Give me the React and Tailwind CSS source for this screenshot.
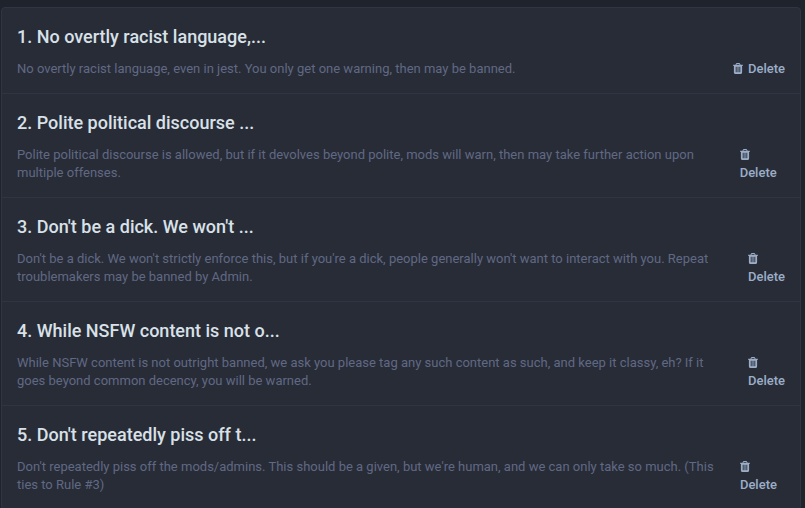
import React from 'react';

const rules = [
    {
        id: 1,
        title: '1. No overtly racist language,...',
        text: 'No overtly racist language, even in jest. You only get one warning, then may be banned.',
    },
    {
        id: 2,
        title: '2. Polite political discourse ...',
        text: 'Polite political discourse is allowed, but if it devolves beyond polite, mods will warn, then may take further action upon multiple offenses.',
    },
    {
        id: 3,
        title: "3. Don't be a dick. We won't ...",
        text: "Don't be a dick. We won't strictly enforce this, but if you're a dick, people generally won't want to interact with you. Repeat troublemakers may be banned by Admin.",
    },
    {
        id: 4,
        title: '4. While NSFW content is not o...',
        text: 'While NSFW content is not outright banned, we ask you please tag any such content as such, and keep it classy, eh? If it goes beyond common decency, you will be warned.',
    },
    {
        id: 5,
        title: "5. Don't repeatedly piss off t...",
        text: "Don't repeatedly piss off the mods/admins. This should be a given, but we're human, and we can only take so much. (This ties to Rule #3)",
    },
];

const TrashIcon = () => (
    <svg viewBox="192 0 1408 1792" fill="currentColor" aria-hidden="true" className="mr-[5px] inline-block h-[13px] w-[10px] align-[-2px]">
        <path d="M704 1376v-704q0-14-9-23t-23-9h-64q-14 0-23 9t-9 23v704q0 14 9 23t23 9h64q14 0 23-9t9-23zm256 0v-704q0-14-9-23t-23-9h-64q-14 0-23 9t-9 23v704q0 14 9 23t23 9h64q14 0 23-9t9-23zm256 0v-704q0-14-9-23t-23-9h-64q-14 0-23 9t-9 23v704q0 14 9 23t23 9h64q14 0 23-9t9-23zm-544-992h448l-48-117q-7-9-17-11h-317q-10 2-17 11zm928 32v64q0 14-9 23t-23 9h-96v948q0 83-47 143.5t-113 60.5h-832q-66 0-113-58.5t-47-141.5v-952h-96q-14 0-23-9t-9-23v-64q0-14 9-23t23-9h309l70-167q15-37 54-63t79-26h320q40 0 79 26t54 63l70 167h309q14 0 23 9t9 23z" />
    </svg>
);

const RuleItem = ({ rule }) => (
    <li className="border-b border-[#313543] p-[15px] last:border-b-0">
        <a href={`#rule-${rule.id}`} className="mb-2.5 block text-lg leading-[27px] font-medium text-[#d9e1e8]">
            {rule.title}
        </a>
        <div className="flex items-center justify-between">
            <div className="text-[#606984]">{rule.text}</div>
            <div>
                <a href={`#delete-${rule.id}`} className="inline-block pl-4 font-medium text-[#9baec8]">
                    <TrashIcon />
                    Delete
                </a>
            </div>
        </div>
    </li>
);

const App = () => {
    return (
        <div className="min-h-screen bg-[#1f232b] pt-[7px] pr-[4px] pl-px font-[Roboto,sans-serif] text-[13px] leading-[18px]">
            <ul className="rounded border border-[#313543] bg-[#282c37]">
                {rules.map((rule) => (
                    <RuleItem key={rule.id} rule={rule} />
                ))}
            </ul>
        </div>
    );
};

export default App;
